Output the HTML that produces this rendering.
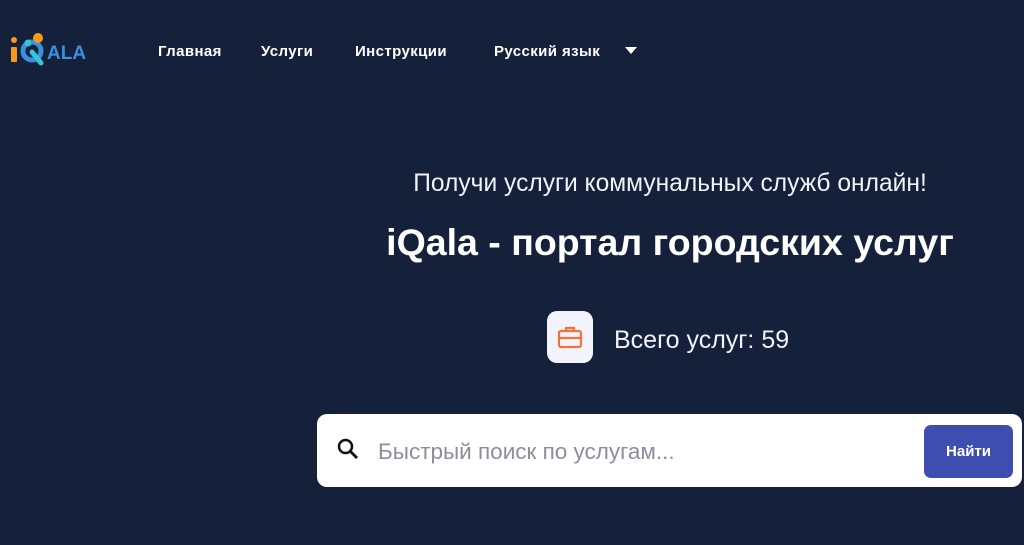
<!DOCTYPE html>
<html><head><meta charset="utf-8"><style>
body{margin:0;width:1024px;height:545px;background:#15203b;font-family:"Liberation Sans",sans-serif;color:#fff;position:relative;overflow:hidden}
.nav a{position:absolute;top:43px;font-size:15px;font-weight:bold;color:#fff;text-decoration:none;letter-spacing:0.4px}
.t1{position:absolute;top:170px;left:0;width:1340px;text-align:center;font-size:24.6px;color:#f0f2f6}
.t2{position:absolute;top:221px;left:0;width:1340px;text-align:center;font-size:37.5px;font-weight:bold}
.ic{position:absolute;left:547px;top:311px;width:46px;height:52px;background:#f3f4fb;border-radius:10px}
.cnt{position:absolute;left:614px;top:326px;font-size:25px;color:#f0f2f6}
.search{position:absolute;left:317px;top:414px;width:705px;height:73px;background:#fff;border-radius:10px}
.ph{position:absolute;left:61px;top:25px;font-size:22.5px;color:#8a8f9a}
.btn{position:absolute;left:607px;top:11px;width:89px;height:53px;background:#3d4db0;border-radius:7px;color:#fff;font-weight:bold;font-size:15px;line-height:53px;text-align:center}
</style></head><body>
<svg style="position:absolute;left:8px;top:30px" width="90" height="40">
<rect x="3" y="17" width="6" height="15" rx="1" fill="#f59b1c"/><circle cx="6" cy="10" r="3" fill="#f59b1c"/>
<circle cx="24" cy="21" r="9" fill="none" stroke="#3b8fe0" stroke-width="5"/>
<circle cx="30" cy="8" r="5" fill="#f59b1c"/><circle cx="20" cy="13" r="3.5" fill="#35c6d8"/>
<line x1="24" y1="22" x2="33" y2="33" stroke="#35c6d8" stroke-width="5" stroke-linecap="round"/>
<text x="39" y="29" font-family="Liberation Sans" font-weight="bold" font-size="19" fill="#3b8fe0">ALA</text>
</svg>
<div class="nav"><a style="left:158px">Главная</a><a style="left:261px">Услуги</a><a style="left:355px">Инструкции</a><a style="left:494px">Русский язык</a></div>
<svg style="position:absolute;left:625px;top:47px" width="12" height="7"><path d="M0 0h12L6 7z" fill="#fff"/></svg>
<div class="t1">Получи услуги коммунальных служб онлайн!</div>
<div class="t2">iQala - портал городских услуг</div>
<div class="ic"><svg width="46" height="52"><g fill="none" stroke="#f5703a" stroke-width="2.2"><rect x="12" y="20" width="22" height="16" rx="2"/><path d="M19 20v-3h8v3M12 27h22"/></g></svg></div>
<div class="cnt">Всего услуг: 59</div>
<div class="search"><svg style="position:absolute;left:20px;top:24px" width="22" height="22"><circle cx="8.5" cy="8.5" r="6.5" fill="none" stroke="#111" stroke-width="2.5"/><line x1="13" y1="13" x2="20" y2="20" stroke="#111" stroke-width="2.8"/></svg><div class="ph">Быстрый поиск по услугам...</div><div class="btn">Найти</div></div>
</body></html>
